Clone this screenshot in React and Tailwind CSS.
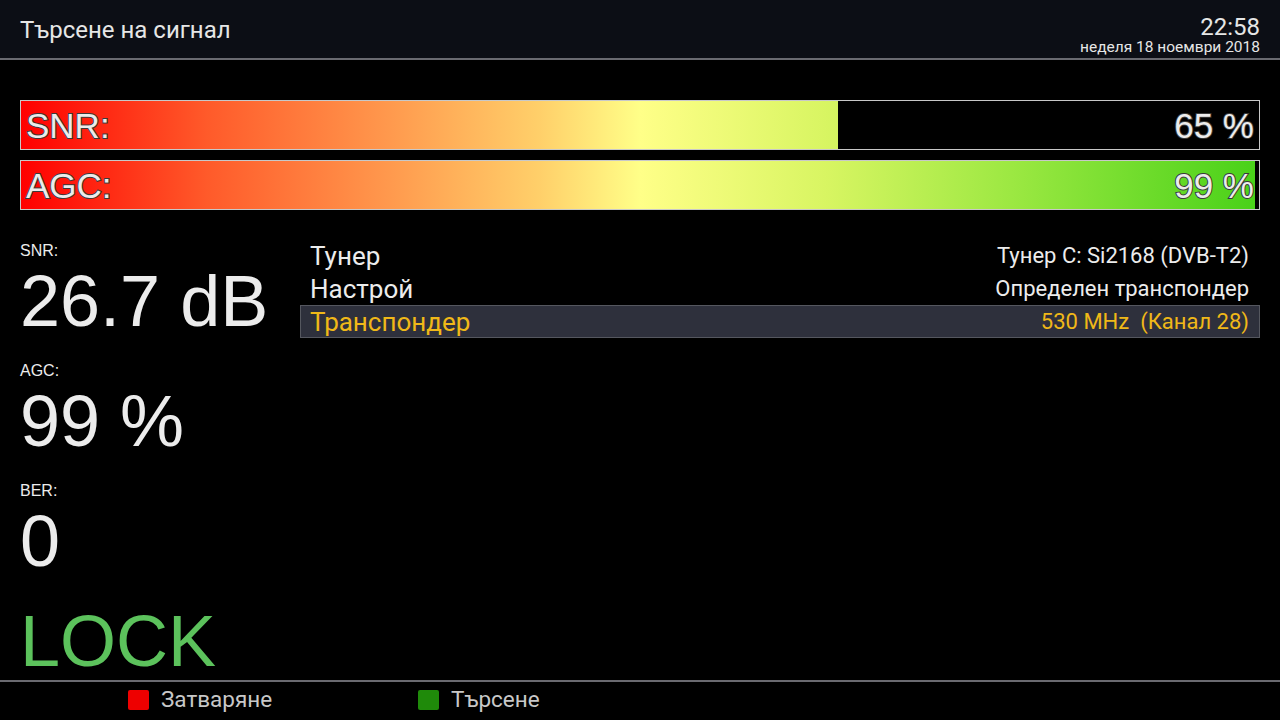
import React from 'react';

const bars = [
  { label: 'SNR:', value: 65, fill: 66 },
  { label: 'AGC:', value: 99, fill: 99.7 },
];

const stats = [
  { label: 'SNR:', value: '26.7 dB', gap: 'mt-0' },
  { label: 'AGC:', value: '99 %', gap: 'mt-[24px]' },
  { label: 'BER:', value: '0', gap: 'mt-[24px]' },
];

const rows = [
  { name: 'Тунер', value: 'Тунер C: Si2168 (DVB-T2)' },
  { name: 'Настрой', value: 'Определен транспондер' },
  { name: 'Транспондер', value: '530 MHz\u00a0\u00a0(Канал 28)', active: true },
];

const SignalBar = ({ label, value, fill }) => (
  <div className="relative h-[50px] border border-[#c8c8c8] bg-black overflow-hidden">
    {/* fill, gradient always spans the full bar */}
    <div className="absolute left-0 top-0 h-full overflow-hidden" style={{ width: `${fill}%` }}>
      <div className="h-full w-[1238px] bg-[linear-gradient(to_right,#ff0000_0%,#ff5a2a_15%,#ff9a4e_30%,#ffd06a_42%,#ffff88_50%,#d8f562_65%,#9ce842_80%,#48d118_100%)]" />
    </div>
    <div className="relative flex h-full items-center justify-between px-[5px] font-['Liberation_Sans',Arial,sans-serif] text-[35px] leading-none text-[#ececec] [-webkit-text-stroke:2px_#3a3a3a] [paint-order:stroke_fill]">
      <span>{label}</span>
      <span>{value} %</span>
    </div>
  </div>
);

const App = () => {
  return (
    <div className="w-[1280px] h-[720px] bg-black flex flex-col overflow-hidden font-['Roboto',sans-serif] text-[#e6e6e6]">
      {/* Header */}
      <div className="h-[60px] shrink-0 bg-[#0c0e15] border-b-2 border-[#6a6a70] flex items-start justify-between px-5">
        <div className="pt-[15px] text-[24px] leading-[30px]">Търсене на сигнал</div>
        <div className="pt-[15px] flex flex-col items-end">
          <div className="text-[24px] leading-[24px]">22:58</div>
          <div className="text-[15.5px] leading-[16px]">неделя 18 ноември 2018</div>
        </div>
      </div>

      {/* Main */}
      <div className="flex-1 px-5 pt-[40px]">
        <div className="flex flex-col gap-[10px]">
          {bars.map((b) => (
            <SignalBar key={b.label} {...b} />
          ))}
        </div>

        <div className="flex mt-[29px]">
          {/* Left stats */}
          <div className="w-[280px] shrink-0 pt-[2px] font-['Liberation_Sans',Arial,sans-serif] text-[#ececec]">
            {stats.map((s) => (
              <div key={s.label} className={s.gap}>
                <div className="text-[16px] leading-[20px]">{s.label}</div>
                <div className="mt-[4px] text-[72px] leading-[72px]">{s.value}</div>
              </div>
            ))}
            <div className="mt-[28px] text-[72px] leading-[72px] text-[#5cc25c]">LOCK</div>
          </div>

          {/* Info list */}
          <div className="flex-1">
            {rows.map((r) => (
              <div
                key={r.name}
                className={`h-[33px] flex items-center justify-between pl-[9px] pr-[10px] border ${
                  r.active ? 'bg-[#2e303c] border-[#55575f] text-[#f0b818]' : 'border-transparent text-[#ececec]'
                }`}
              >
                <span className="text-[26px] leading-none">{r.name}</span>
                <span className="text-[22px] leading-none">{r.value}</span>
              </div>
            ))}
          </div>
        </div>
      </div>

      {/* Footer */}
      <div className="h-[40px] shrink-0 border-t-2 border-[#6a6a70] flex items-center pb-[3px] pl-[128px] text-[22.5px] text-[#c8c8c8]">
        <div className="flex items-center gap-3 w-[290px]">
          <span className="w-[21px] h-[20px] bg-[#ee0000] rounded-[2px]" />
          <span>Затваряне</span>
        </div>
        <div className="flex items-center gap-3">
          <span className="w-[21px] h-[20px] bg-[#1f8a0a] rounded-[2px]" />
          <span>Търсене</span>
        </div>
      </div>
    </div>
  );
};

export default App;
